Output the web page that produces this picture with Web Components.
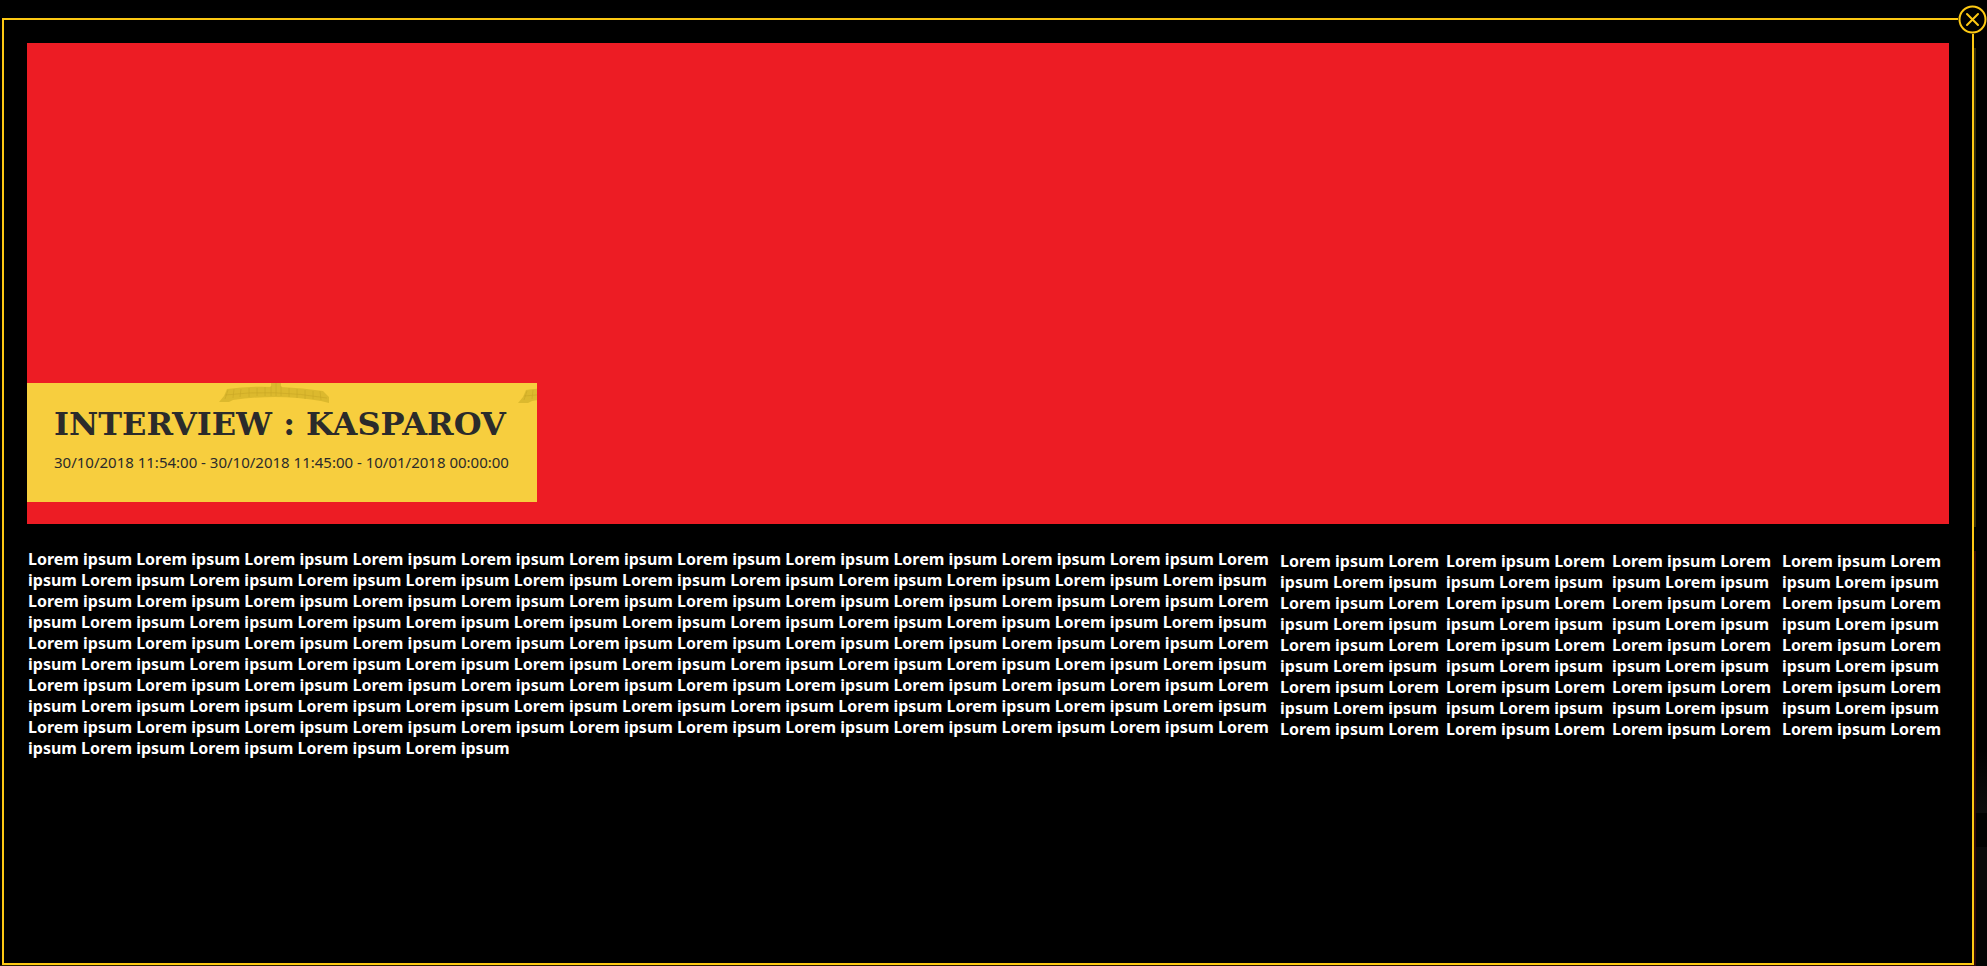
<!DOCTYPE html>
<html lang="en">
<head>
<meta charset="utf-8">
<title>Interview : Kasparov</title>
<style>
  html { background: #000; }
  body { margin: 0; }
</style>
</head>
<body>
<article-modal>
  <article-hero slot="hero">
    <span slot="title">INTERVIEW : KASPAROV</span>
    <span slot="dates">30/10/2018 11:54:00 - 30/10/2018 11:45:00 - 10/01/2018 00:00:00</span>
  </article-hero>
  <article-columns>
    <lorem-text words="216"></lorem-text>
    <lorem-text words="27"></lorem-text>
    <lorem-text words="27"></lorem-text>
    <lorem-text words="27"></lorem-text>
    <lorem-text words="27"></lorem-text>
  </article-columns>
</article-modal>

<template id="modal">
  <style>
    :host {
      display: flex;
      box-sizing: border-box;
      min-height: 100vh;
      padding: 18px 13px 1px 2px;
      color: #fff;
      font: 700 16px/21px "Noto Sans", "Open Sans", sans-serif;
      background:
        linear-gradient(#000 48px, #33290a 48px 527px, #000 527px 551px, #330808 551px) right 11px top / 2px 100% no-repeat,
        linear-gradient(#000 750px, #0d0d0d 813px, #020202 813px 847px, #0a0a0a 847px 890px, #040404 890px) right top / 11px 100% no-repeat,
        linear-gradient(90deg, #2e2204, #2e0a04) left bottom / 100% 1px no-repeat,
        #000;
    }
    section {
      position: relative;
      flex: 1;
      min-width: 0;
      border: 2px solid #fdc913;
      padding: 23px;
    }
    button {
      position: absolute;
      top: -15px;
      right: -15px;
      width: 29px;
      height: 29px;
      padding: 0;
      border: 0;
      border-radius: 50%;
      background: #000;
      cursor: pointer;
    }
    svg { display: block; }
  </style>
  <section role="dialog" aria-label="Interview">
    <slot name="hero"></slot>
    <slot></slot>
    <button type="button" aria-label="Close">
      <svg width="29" height="29" viewBox="0 0 29 29" fill="none" stroke="#fdc913" stroke-width="2">
        <circle cx="14.5" cy="14.5" r="13"/>
        <path d="M9 9l11 11M20 9L9 20" stroke-linecap="round"/>
      </svg>
    </button>
  </section>
</template>

<template id="hero">
  <style>
    :host {
      display: flex;
      align-items: flex-end;
      box-sizing: border-box;
      aspect-ratio: 4 / 1;
      padding-bottom: 22px;
      background: #ed1c24;
    }
    header {
      position: relative;
      overflow: hidden;
      padding: 21px 27px 28px;
      width: 456px;
      background: #f7ce3e;
      color: #2b2b2b;
      white-space: nowrap;
    }
    svg { position: absolute; left: 0; top: 0; }
    h1, p { position: relative; margin: 0; }
    h1 { font: 700 32px/40px "DejaVu Serif", serif; }
    p { margin-top: 6px; font: 400 15px/24px "Noto Sans", "Open Sans", sans-serif; }
  </style>
  <header>
    <svg width="510" height="30" aria-hidden="true">
      <defs>
        <g id="beam">
          <path fill="#dcb92e" d="M244 0h10v4q22 1 42 4l6 6v6l-8-2q-24-4-46-4t-42 3l-4 2h-10l5-6 3-7q22-3 44-2z"/>
          <path fill="none" stroke="#c9a724" stroke-opacity=".6" d="M198 12q48-6 102 3M201 7l-3 9M207 6l-1 9M214 6l-1 8M222 5v9M230 5v8M238 4v9M244 3v10M249 0v13M254 3v10M262 5v9M270 6v9M278 7v9M286 8v8M293 8l1 9"/>
        </g>
      </defs>
      <use href="#beam"/>
      <use href="#beam" x="299" y="1"/>
    </svg>
    <h1><slot name="title"></slot></h1>
    <p><slot name="dates"></slot></p>
  </header>
</template>

<template id="columns">
  <style>
    :host {
      display: grid;
      grid-template-columns: 1252fr 166fr 166fr 170fr 167fr;
      margin: 25px 0 0 1px;
    }
    ::slotted(:not(:first-child)) { padding-top: 2px; }
  </style>
  <slot></slot>
</template>

<template id="lorem">
  <style>
    :host { display: block; min-width: 0; }
    p { margin: 0; }
  </style>
  <p></p>
</template>

<script>
  class TemplateElement extends HTMLElement {
    connectedCallback() {
      if (this.shadowRoot) return;
      const source = document.getElementById(this.constructor.template);
      this.attachShadow({ mode: 'open' }).append(source.content.cloneNode(true));
      this.ready();
    }
    ready() {}
  }

  customElements.define('article-modal', class extends TemplateElement {
    static template = 'modal';
    ready() {
      this.shadowRoot.querySelector('button').addEventListener('click', () => this.remove());
    }
  });

  customElements.define('article-hero', class extends TemplateElement {
    static template = 'hero';
  });

  customElements.define('article-columns', class extends TemplateElement {
    static template = 'columns';
  });

  // Filler paragraph: alternates "Lorem" and "ipsum" for the given number of words.
  customElements.define('lorem-text', class extends TemplateElement {
    static template = 'lorem';
    ready() {
      const count = Number(this.getAttribute('words'));
      this.shadowRoot.querySelector('p').textContent =
        Array.from({ length: count }, (_, i) => (i % 2 ? 'ipsum' : 'Lorem')).join(' ');
    }
  });
</script>
</body>
</html>
